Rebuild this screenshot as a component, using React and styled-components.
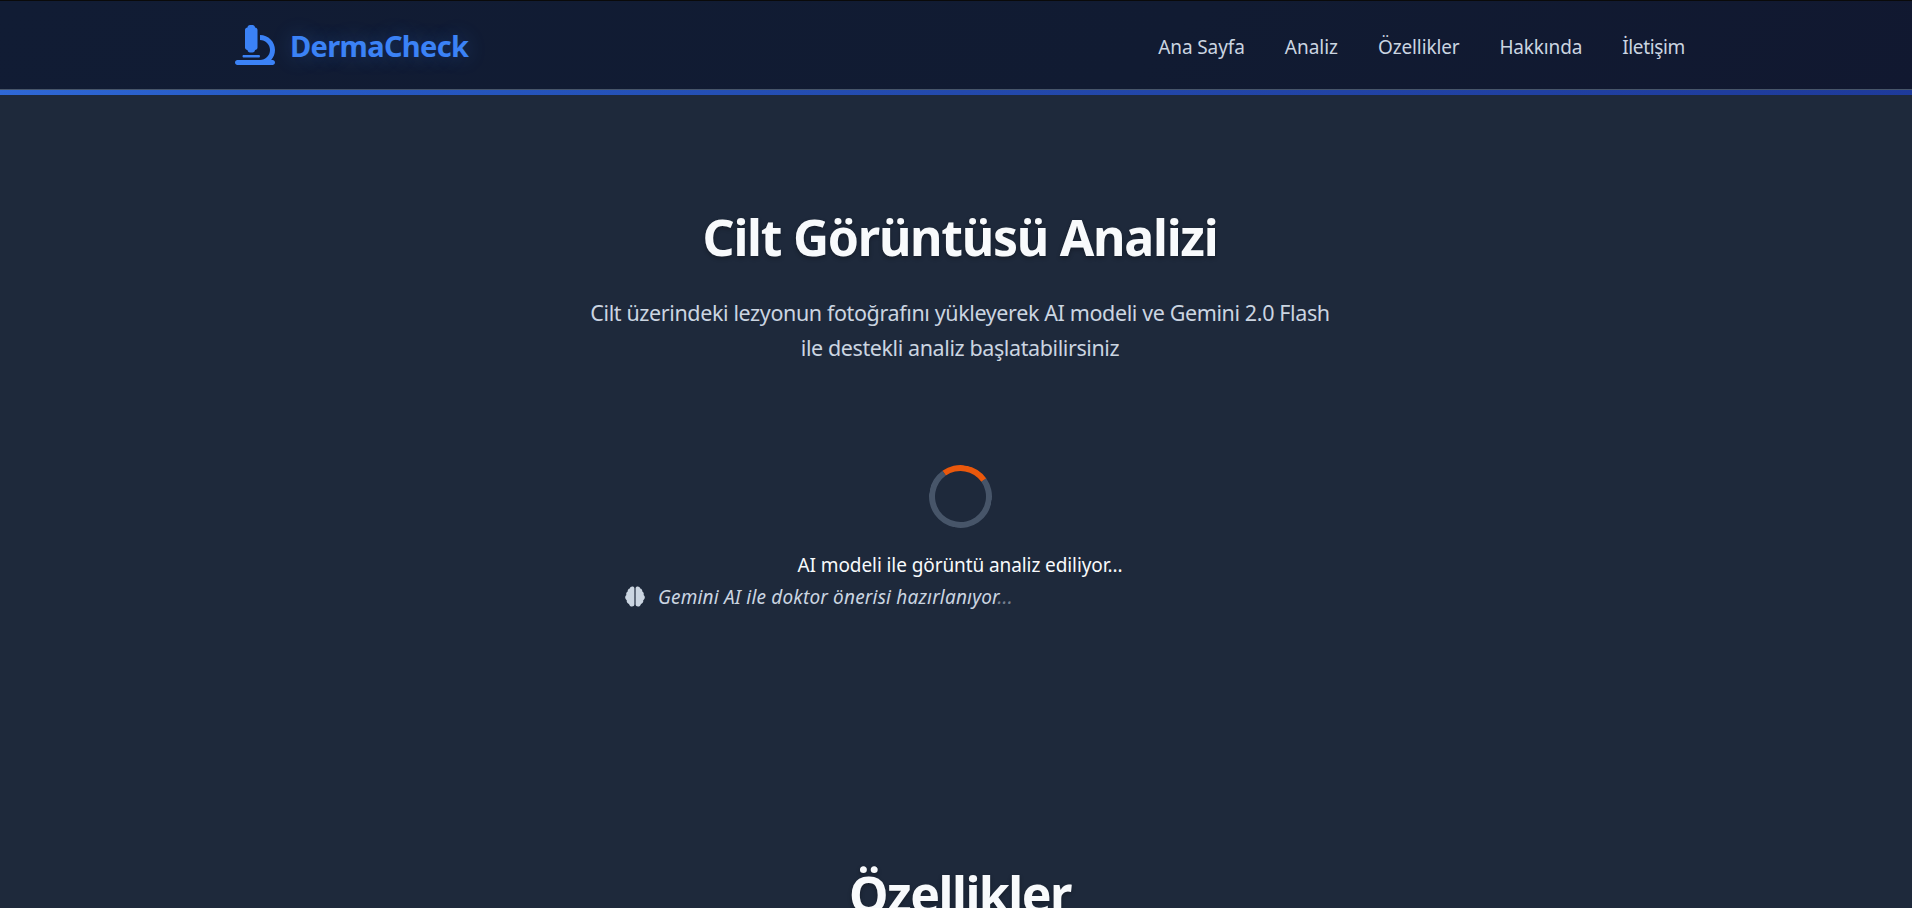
import React from "react";
import styled, { createGlobalStyle } from "styled-components";
import { FaMicroscope } from "react-icons/fa6";

const Global = createGlobalStyle`
  * { box-sizing: border-box; margin: 0; padding: 0; }
  html { overflow: hidden; }
  body { font-family: "Noto Sans", "Open Sans", sans-serif; background: #1e293b; color: #f8fafc; overflow: hidden; }
`;

const Page = styled.div`
  width: 1920px;
  height: 908px;
  overflow: hidden;
  background: #1e293b;
`;

const Header = styled.header`
  height: 90px;
  border-top: 1px solid #0a0a0a;
  border-bottom: 1px solid #475569;
  background: linear-gradient(135deg, #111c34 0%, #111b32 60%, #111830 100%);
`;

const Bar = styled.div`
  height: 5px;
  background: linear-gradient(90deg, #2f68d6 0%, #265ac4 14%, #2349ac 50%, #1e3a9a 100%);
`;

const HeaderInner = styled.div`
  width: 1450px;
  height: 88px;
  margin: 0 auto;
  display: flex;
  align-items: center;
  justify-content: space-between;
`;

const Logo = styled.div`
  display: flex;
  align-items: center;
  gap: 15px;
  color: #3b82f6;
  svg { width: 40px; height: 40px; display: block; }
`;

const Line = styled.span`
  display: block;
  white-space: nowrap;
  font-size: ${(p) => p.$size}px;
  letter-spacing: ${(p) => p.$track || 0}px;
`;

const Brand = styled(Line)`
  font-weight: 700;
  text-shadow: 0 0 20px rgba(59, 130, 246, 0.3);
`;

const Nav = styled.nav`
  display: flex;
  gap: 40px;
  padding-top: 3px;
  color: #cbd5e1;
`;

const Main = styled.main`
  display: flex;
  flex-direction: column;
  align-items: center;
  padding-top: 100px;
`;

const Title = styled.h2`
  font-size: 50px;
  line-height: 84px;
  font-weight: 700;
  letter-spacing: ${(p) => p.$track}px;
  white-space: nowrap;
  text-shadow: 0 2px 4px rgba(0, 0, 0, 0.3);
`;

const Lead = styled.p`
  margin-top: 16px;
  color: #cbd5e1;
  text-align: center;
  line-height: 35px;
`;

const Spinner = styled.div`
  width: 63px;
  height: 63px;
  margin: 100px 0 0 1px;
  border: 6px solid #475569;
  border-top-color: #ea580c;
  border-radius: 50%;
  transform: rotate(10deg);
`;

const Status = styled.p`
  margin-top: 21px;
  line-height: 32px;
`;

const Hint = styled.div`
  width: 670px;
  display: flex;
  align-items: center;
  gap: 13px;
  line-height: 32px;
  font-style: italic;
  color: #cbd5e1;
  svg { width: 20px; height: 21px; display: block; margin-bottom: 2px; }
`;

const Dots = styled.span`
  opacity: 0.5;
`;

const Features = styled.section`
  margin-top: 239px;
`;

const links = [
  { label: "Ana Sayfa", track: -0.1 },
  { label: "Analiz", track: 0 },
  { label: "Özellikler", track: -0.14 },
  { label: "Hakkında", track: -0.16 },
  { label: "İletişim", track: -0.35 },
];

function BrainIcon() {
  const lobe =
    "M9.4 2.2C9.4 1 8.4.4 7.3.4C6 .4 5 1.2 4.8 2.4C3.3 2.7 2.5 4 2.7 5.5C1.4 6.3.9 7.6 1.4 8.9C.2 9.8-.1 11.2.4 12.5C.7 13.3 1.2 13.9 1.8 14.3C1.4 16 2.4 17.5 4 17.9C4.4 19.5 5.6 20.5 7 20.5C8.4 20.5 9.4 19.7 9.4 18.3Z";
  return (
    <svg viewBox="0 0 20 21" fill="currentColor">
      <path d={lobe} />
      <path d={lobe} transform="translate(20 0) scale(-1 1)" />
    </svg>
  );
}

export default function App() {
  return (
    <Page lang="tr">
      <Global />
      <Header>
        <HeaderInner>
          <Logo>
            <FaMicroscope />
            <Brand $size={29} $track={-0.65}>DermaCheck</Brand>
          </Logo>
          <Nav>
            {links.map((l) => (
              <Line key={l.label} $size={19} $track={l.track}>{l.label}</Line>
            ))}
          </Nav>
        </HeaderInner>
      </Header>
      <Bar />
      <Main>
        <Title $track={-1.27}>Cilt Görüntüsü Analizi</Title>
        <Lead>
          <Line $size={21.5} $track={-0.38}>Cilt üzerindeki lezyonun fotoğrafını yükleyerek AI modeli ve Gemini 2.0 Flash</Line>
          <Line $size={21.5} $track={-0.4}>ile destekli analiz başlatabilirsiniz</Line>
        </Lead>
        <Spinner />
        <Status>
          <Line $size={19} $track={-0.09}>AI modeli ile görüntü analiz ediliyor...</Line>
        </Status>
        <Hint>
          <BrainIcon />
          <Line $size={19} $track={0.18}>Gemini AI ile doktor önerisi hazırlanıyor<Dots>...</Dots></Line>
        </Hint>
        <Features>
          <Title $track={-1.5}>Özellikler</Title>
        </Features>
      </Main>
    </Page>
  );
}
